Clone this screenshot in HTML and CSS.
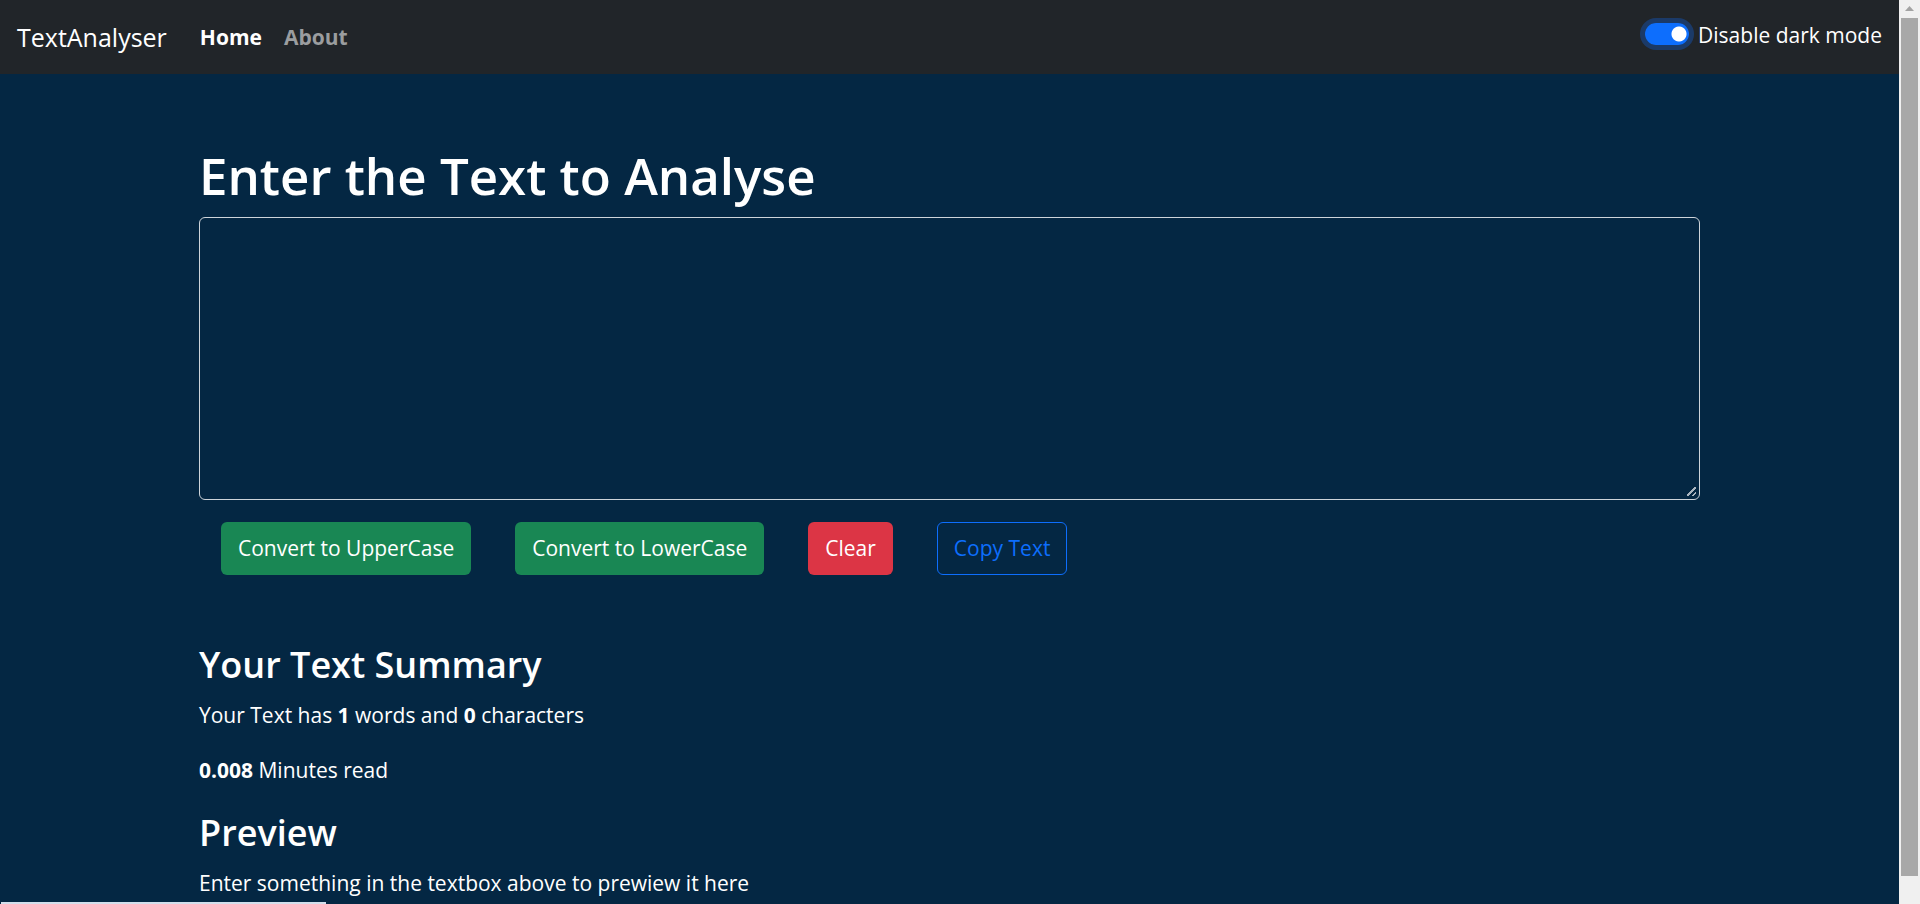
FILE: index.html
```html
<!DOCTYPE html>
<html lang="en">
<head>
<meta charset="utf-8">
<meta name="viewport" content="width=device-width, initial-scale=1">
<title>TextAnalyser</title>
<link rel="stylesheet" href="styles.css">
</head>
<body>
<nav class="navbar">
  <a class="brand" href="#">TextAnalyser</a>
  <div class="nav-links">
    <a class="nav-link active" href="#">Home</a>
    <a class="nav-link" href="#about">About</a>
  </div>
  <div class="mode-switch">
    <input class="switch" type="checkbox" role="switch" id="mode" checked>
    <label for="mode">Disable dark mode</label>
  </div>
</nav>
<main class="container">
  <h1 class="title"><label for="box">Enter the Text to Analyse</label></h1>
  <textarea class="text-box" id="box" rows="8"></textarea>
  <div class="actions">
    <button class="btn btn-success" type="button">Convert to UpperCase</button>
    <button class="btn btn-success" type="button">Convert to LowerCase</button>
    <button class="btn btn-danger" type="button">Clear</button>
    <button class="btn btn-outline" type="button">Copy Text</button>
  </div>
  <section class="summary">
    <h2>Your Text Summary</h2>
    <p>Your Text has <b>1</b> words and <b>0</b> characters</p>
    <p><b>0.008</b> Minutes read</p>
    <h2>Preview</h2>
    <p>Enter something in the textbox above to prewiew it here</p>
  </section>
</main>
<div class="scrollbar" aria-hidden="true">
  <svg class="arrow" width="17" height="18" viewBox="0 0 17 18"><path d="M4 11 8.500 6 13 11Z" fill="#a3a3a3"/></svg>
  <div class="thumb"></div>
</div>
<div class="status" aria-hidden="true"></div>
</body>
</html>
```
FILE: styles.css
```css
* { box-sizing: border-box; }
body {
  margin: 0;
  padding-right: 21px;
  background: #042743;
  color: #fff;
  font-family: "Open Sans", "Noto Sans", sans-serif;
  font-size: 21px;
  line-height: 33px;
}
.navbar {
  display: flex;
  align-items: center;
  min-height: 74px;
  padding: 0 17px;
  background: #212529;
}
.brand {
  margin-right: 33px;
  color: #fff;
  font-size: 25px;
  text-decoration: none;
}
.nav-links { display: flex; flex: 1; gap: 22px; }
.nav-link { color: #9b9d9f; font-weight: 700; text-decoration: none; }
.nav-link.active { color: #fff; }
.mode-switch { display: flex; align-items: center; gap: 9px; padding-bottom: 4px; }
.switch {
  appearance: none;
  width: 44px;
  height: 22px;
  margin: 0 0 2px;
  border-radius: 11px;
  background: radial-gradient(circle at 34px 11px, #fff 7px, #0d6efd 8px);
  box-shadow: 0 0 0 5px rgba(13, 110, 253, 0.3);
}
.container { max-width: 1535px; margin: 0 auto; padding: 70px 17px 0; }
.title { margin: 0 0 11px; font-size: 51px; font-weight: 600; line-height: 62px; }
.text-box {
  display: block;
  width: 100%;
  padding: 8px 16px 9px;
  border: 1px solid #ced4da;
  border-radius: 6px;
  background: transparent;
  color: #fff;
  font: inherit;
  resize: vertical;
}
.text-box::-webkit-resizer {
  background: linear-gradient(135deg, transparent 44%, #a9b4be 44%, #a9b4be 58%, transparent 58%, transparent 74%, #a9b4be 74%, #a9b4be 88%, transparent 88%) 3px 3px / 9px 9px no-repeat;
}
.actions { display: flex; flex-wrap: wrap; gap: 22px 44px; padding: 22px; }
.btn {
  padding: 9px 16px;
  border: 1px solid transparent;
  border-radius: 6px;
  color: #fff;
  font: inherit;
}
.btn-success { background: #198754; }
.btn-danger { background: #dc3545; }
.btn-outline { border-color: #0d6efd; background: transparent; color: #0d6efd; }
.summary { padding-top: 44px; }
.summary h2 { margin: 0 0 11px; font-size: 36px; font-weight: 600; line-height: 47px; }
.summary p { margin: 0 0 22px; }
.summary p:last-child { margin-bottom: 0; }
.scrollbar {
  position: fixed;
  top: 0;
  right: 0;
  bottom: 0;
  display: flex;
  flex-direction: column;
  width: 21px;
  padding: 0 2px 28px;
  background: #f0f0f0;
}
.thumb { flex: 1; background: #a8a8a8; }
.status {
  position: fixed;
  bottom: 0;
  left: 1px;
  width: 325px;
  height: 2px;
  background: #d3dfec;
}
```
